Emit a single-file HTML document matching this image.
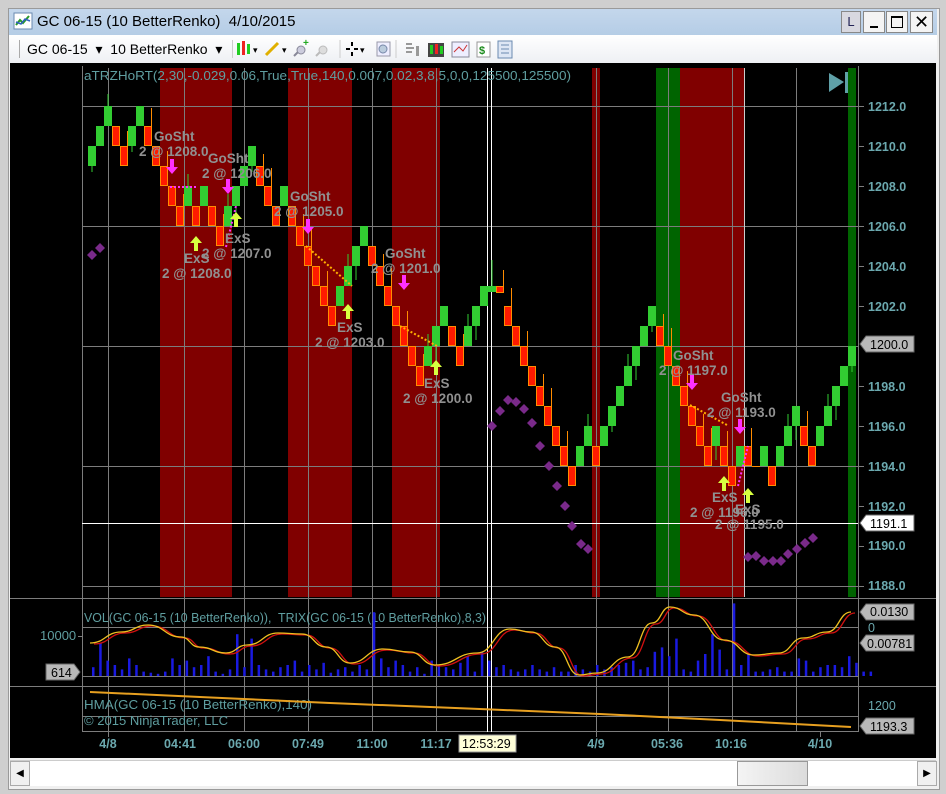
<!DOCTYPE html>
<html><head><meta charset="utf-8"><style>
html,body{margin:0;padding:0;width:946px;height:794px;overflow:hidden;background:#d6d6d6;font-family:"Liberation Sans",sans-serif}
.abs{position:absolute}
</style></head><body>
<div class="abs" style="left:0;top:0;width:946px;height:794px;background:#cfcfcf"></div>
<div class="abs" style="top:8px;left:8px;width:930px;height:780px;background:#f0f0f0;border:1px solid #9a9a9a"></div>
<div class="abs" style="left:9px;top:9px;width:928px;height:26px;background:linear-gradient(#c4d7ec,#b5cde6)"></div>
<svg class="abs" style="left:13px;top:12px" width="20" height="18"><rect x="1" y="1" width="18" height="16" fill="#fff" stroke="#6a8ab0"/><polyline points="3,13 7,8 10,11 16,4" fill="none" stroke="#2a9a2a" stroke-width="2"/><polyline points="3,10 8,12 12,7 17,9" fill="none" stroke="#3060c0" stroke-width="1.5"/></svg>
<div class="abs" style="left:37px;top:13px;font-size:15px;color:#000">GC 06-15 (10 BetterRenko)&nbsp; 4/10/2015</div>
<div class="abs" style="left:841px;top:11px;width:18px;height:20px;background:#d8d8e0;border:1px solid #888;font-size:13px;text-align:center;line-height:20px;color:#225">L</div>
<div class="abs" style="left:863px;top:11px;width:20px;height:20px;background:#f4f4f4;border:1px solid #888"><div class="abs" style="left:6px;top:14px;width:8px;height:2px;background:#000"></div></div>
<div class="abs" style="left:886px;top:11px;width:20px;height:20px;background:#f4f4f4;border:1px solid #888"><div class="abs" style="left:4px;top:4px;width:10px;height:9px;border:1px solid #000;border-top-width:2px"></div></div>
<div class="abs" style="left:910px;top:11px;width:21px;height:20px;background:#f4f4f4;border:1px solid #888;font-size:18px;line-height:20px;text-align:center">✕</div>
<div class="abs" style="left:9px;top:35px;width:928px;height:28px;background:linear-gradient(#ffffff,#eef0f4)"></div>
<div class="abs" style="left:27px;top:41px;font-size:14px;color:#000">GC 06-15 &nbsp;▾&nbsp; 10 BetterRenko &nbsp;▾</div>
<div class="abs" style="left:19px;top:40px;width:1px;height:18px;background:#aaa"></div>
<div class="abs" style="left:232px;top:40px;width:1px;height:18px;background:#ccc"></div>
<svg class="abs" style="left:236px;top:38px" width="280" height="22">
<rect x="1" y="5" width="3" height="12" fill="#2c2"/><rect x="6" y="3" width="3" height="14" fill="#e22"/><rect x="11" y="6" width="3" height="10" fill="#2c2"/><text x="17" y="15" font-size="9">▾</text>
<line x1="30" y1="17" x2="42" y2="5" stroke="#e0b000" stroke-width="3"/><text x="46" y="15" font-size="9">▾</text>
<circle cx="65" cy="12" r="4" fill="#ccd" stroke="#889"/><line x1="58" y1="18" x2="62" y2="14" stroke="#889" stroke-width="2"/><text x="67" y="8" font-size="10" fill="#2a2" font-weight="bold">+</text>
<circle cx="87" cy="12" r="4" fill="#ddd" stroke="#bbb"/><line x1="80" y1="18" x2="84" y2="14" stroke="#bbb" stroke-width="2"/>
<line x1="104" y1="2" x2="104" y2="20" stroke="#ccc"/>
<path d="M110 11h4M118 11h4M116 4v4M116 14v4" stroke="#000" stroke-width="2"/><text x="124" y="15" font-size="9">▾</text>
<rect x="141" y="4" width="13" height="14" fill="#eef" stroke="#99a"/><circle cx="147" cy="11" r="4" fill="#bcd" stroke="#78a"/>
<line x1="160" y1="2" x2="160" y2="20" stroke="#ccc"/>
<path d="M170 6h6M170 10h8M170 14h6" stroke="#999" stroke-width="2"/><rect x="180" y="8" width="3" height="10" fill="#999"/>
<rect x="192" y="5" width="16" height="14" fill="#444"/><rect x="194" y="7" width="3" height="9" fill="#2c2"/><rect x="199" y="6" width="3" height="10" fill="#e22"/><rect x="204" y="8" width="3" height="8" fill="#2c2"/>
<rect x="216" y="4" width="17" height="15" fill="#eef" stroke="#889"/><polyline points="218,14 223,9 227,13 231,7" fill="none" stroke="#c33"/>
<rect x="241" y="4" width="13" height="15" fill="#fff" stroke="#999"/><text x="243" y="16" font-size="11" fill="#1a8a1a" font-weight="bold">$</text>
<rect x="262" y="3" width="14" height="17" fill="#dde6f4" stroke="#6a8ab0"/><path d="M265 7h8M265 11h8M265 15h8" stroke="#6a8ab0"/>
</svg>
<svg class="abs" style="left:0;top:0" width="946" height="794" id="ch">
<rect x="10" y="63" width="926" height="695" fill="#000"/>
<g fill="#800000"><rect x="160" y="68" width="72" height="529"/><rect x="288" y="68" width="64" height="529"/><rect x="392" y="68" width="48" height="529"/><rect x="592" y="68" width="8" height="529"/><rect x="680" y="68" width="64" height="529"/></g>
<g fill="#006400"><rect x="656" y="68" width="24" height="529"/><rect x="848" y="68" width="8" height="529"/></g>
<g stroke="#7c7c7c" stroke-width="1">
<line x1="82" y1="106.5" x2="858" y2="106.5"/><line x1="82" y1="226.5" x2="858" y2="226.5"/><line x1="82" y1="346.5" x2="858" y2="346.5"/><line x1="82" y1="466.5" x2="858" y2="466.5"/><line x1="82" y1="586.5" x2="858" y2="586.5"/>
<line x1="108.5" y1="68" x2="108.5" y2="732"/><line x1="184.5" y1="68" x2="184.5" y2="732"/><line x1="244.5" y1="68" x2="244.5" y2="732"/><line x1="308.5" y1="68" x2="308.5" y2="732"/><line x1="372.5" y1="68" x2="372.5" y2="732"/><line x1="436.5" y1="68" x2="436.5" y2="732"/><line x1="596.5" y1="68" x2="596.5" y2="732"/><line x1="668.5" y1="68" x2="668.5" y2="732"/><line x1="732.5" y1="68" x2="732.5" y2="732"/><line x1="796.5" y1="68" x2="796.5" y2="732"/>
<line x1="82.5" y1="66" x2="82.5" y2="732"/><line x1="858.5" y1="66" x2="858.5" y2="732"/>
<line x1="10" y1="598.5" x2="936" y2="598.5"/><line x1="10" y1="686.5" x2="936" y2="686.5"/><line x1="82" y1="627.5" x2="858" y2="627.5"/><line x1="82" y1="676.5" x2="858" y2="676.5"/><line x1="82" y1="716.5" x2="858" y2="716.5"/><line x1="82" y1="731.5" x2="858" y2="731.5"/>
</g>
<g stroke="#fff"><line x1="487.5" y1="68" x2="487.5" y2="732"/><line x1="491.5" y1="68" x2="491.5" y2="732"/><line x1="82" y1="523.5" x2="858" y2="523.5"/><line x1="744.5" y1="68" x2="744.5" y2="597" stroke="#ccc"/></g>
<g id="bricks"></g>
<g fill="#7a2a8a" id="dia"></g>
<g stroke="#ffb000" stroke-width="2" stroke-dasharray="2,2" fill="none"><line x1="306" y1="246" x2="352" y2="286"/><line x1="400" y1="326" x2="437" y2="346"/><line x1="690" y1="405" x2="727" y2="425"/></g>
<g stroke="#ff30ff" stroke-width="2" stroke-dasharray="2,2" fill="none"><line x1="170" y1="187" x2="198" y2="187"/><line x1="226" y1="247" x2="236" y2="206"/><line x1="738" y1="486" x2="748" y2="446"/></g>
<g id="arrows"></g>
<g font-size="13.5" font-weight="bold" fill="#909090" font-family="Liberation Sans,sans-serif">
<text x="154" y="141">GoSht</text><text x="139" y="156">2 @ 1208.0</text>
<text x="208" y="163">GoSht</text><text x="202" y="178">2 @ 1206.0</text>
<text x="290" y="201">GoSht</text><text x="274" y="216">2 @ 1205.0</text>
<text x="225" y="243">ExS</text><text x="202" y="258">2 @ 1207.0</text>
<text x="184" y="263">ExS</text><text x="162" y="278">2 @ 1208.0</text>
<text x="385" y="258">GoSht</text><text x="371" y="273">2 @ 1201.0</text>
<text x="337" y="332">ExS</text><text x="315" y="347">2 @ 1203.0</text>
<text x="424" y="388">ExS</text><text x="403" y="403">2 @ 1200.0</text>
<text x="673" y="360">GoSht</text><text x="659" y="375">2 @ 1197.0</text>
<text x="721" y="402">GoSht</text><text x="707" y="417">2 @ 1193.0</text>
<text x="735" y="514">ExS</text><text x="712" y="502">ExS</text><text x="690" y="517">2 @ 1196.0</text>
<text x="715" y="529">2 @ 1195.0</text>
</g>
<g fill="#5f9ea0" font-size="13" font-family="Liberation Sans,sans-serif">
<text x="84" y="80" textLength="487" lengthAdjust="spacingAndGlyphs">aTRZHoRT(2,30,-0.029,0.06,True,True,140,0.007,0.02,3,8,5,0,0,125500,125500)</text>
<text x="84" y="622" textLength="402" lengthAdjust="spacingAndGlyphs">VOL(GC 06-15 (10 BetterRenko)),&nbsp; TRIX(GC 06-15 (10 BetterRenko),8,3)</text>
<text x="84" y="709" textLength="228" lengthAdjust="spacingAndGlyphs">HMA(GC 06-15 (10 BetterRenko),140)</text>
<text x="84" y="725" textLength="144" lengthAdjust="spacingAndGlyphs">© 2015 NinjaTrader, LLC</text>
<text x="40" y="640">10000</text><line x1="78" y1="636.5" x2="82" y2="636.5" stroke="#7c7c7c"/>
</g>
<g fill="#6ba8ae" font-size="12.5" font-weight="bold" font-family="Liberation Sans,sans-serif">
<text x="868" y="111">1212.0</text><text x="868" y="151">1210.0</text><text x="868" y="191">1208.0</text><text x="868" y="231">1206.0</text><text x="868" y="271">1204.0</text><text x="868" y="311">1202.0</text><text x="868" y="391">1198.0</text><text x="868" y="431">1196.0</text><text x="868" y="471">1194.0</text><text x="868" y="511">1192.0</text><text x="868" y="550">1190.0</text><text x="868" y="590">1188.0</text>
<text x="868" y="632" font-weight="normal">0</text><text x="868" y="710" font-weight="normal">1200</text>
</g>
<g stroke="#7c7c7c"><line x1="858" y1="106.5" x2="864" y2="106.5"/><line x1="858" y1="146.5" x2="864" y2="146.5"/><line x1="858" y1="186.5" x2="864" y2="186.5"/><line x1="858" y1="226.5" x2="864" y2="226.5"/><line x1="858" y1="266.5" x2="864" y2="266.5"/><line x1="858" y1="306.5" x2="864" y2="306.5"/><line x1="858" y1="386.5" x2="864" y2="386.5"/><line x1="858" y1="426.5" x2="864" y2="426.5"/><line x1="858" y1="466.5" x2="864" y2="466.5"/><line x1="858" y1="506.5" x2="864" y2="506.5"/><line x1="858" y1="546.5" x2="864" y2="546.5"/><line x1="858" y1="586.5" x2="864" y2="586.5"/></g>
<g font-family="Liberation Sans,sans-serif" font-size="12.5">
<path d="M860 344 L866 336 H914 V352 H866 Z" fill="#b8b8b8" stroke="#666"/><text x="870" y="349">1200.0</text>
<path d="M860 523 L866 515 H914 V531 H866 Z" fill="#fff" stroke="#666"/><text x="870" y="528">1191.1</text>
<path d="M860 612 L866 604 H914 V620 H866 Z" fill="#b8b8b8" stroke="#666"/><text x="870" y="616">0.0130</text>
<path d="M860 643 L866 635 H914 V651 H866 Z" fill="#b8b8b8" stroke="#666"/><text x="867" y="648">0.00781</text>
<path d="M860 726 L866 718 H914 V734 H866 Z" fill="#b8b8b8" stroke="#666"/><text x="870" y="731">1193.3</text>
<path d="M80 672 L74 664 H46 V680 H74 Z" fill="#b8b8b8" stroke="#666"/><text x="51" y="677">614</text>
<rect x="459" y="735" width="57" height="17" fill="#ffffd8" stroke="#999"/><text x="462" y="748" fill="#000">12:53:29</text>
</g>
<g fill="#6ba8ae" font-size="12.5" font-weight="bold" font-family="Liberation Sans,sans-serif" text-anchor="middle">
<text x="108" y="748">4/8</text><text x="180" y="748">04:41</text><text x="244" y="748">06:00</text><text x="308" y="748">07:49</text><text x="372" y="748">11:00</text><text x="436" y="748">11:17</text><text x="596" y="748">4/9</text><text x="667" y="748">05:36</text><text x="731" y="748">10:16</text><text x="820" y="748">4/10</text>
</g>
<g stroke="#7c7c7c"><line x1="108.5" y1="732" x2="108.5" y2="737"/><line x1="596.5" y1="732" x2="596.5" y2="737"/><line x1="820.5" y1="732" x2="820.5" y2="737"/></g>
<g id="vol" fill="#1a1ae0"></g>
<path id="trixr" fill="none" stroke="#d01010" stroke-width="1.3"/>
<path id="trixy" fill="none" stroke="#f0c020" stroke-width="1.3"/>
<polyline points="90,692 200,697 330,703 480,709 600,714 720,720 851,727" fill="none" stroke="#e8a020" stroke-width="2"/>
<polygon points="829,73 829,92 844,82" fill="#5fa0a8"/><rect x="845" y="72" width="3" height="21" fill="#5fa0a8"/>
</svg>
<div class="abs" style="left:10px;top:760px;width:926px;height:25px;background:#fff;border-top:1px solid #ccc"></div>
<div class="abs" style="left:10px;top:761px;width:18px;height:23px;background:#f0f0f0;border:1px solid #aaa;font-size:10px;line-height:23px;text-align:center">◀</div>
<div class="abs" style="left:917px;top:761px;width:18px;height:23px;background:#f0f0f0;border:1px solid #aaa;font-size:10px;line-height:23px;text-align:center">▶</div>
<div class="abs" style="left:737px;top:761px;width:69px;height:23px;background:linear-gradient(90deg,#f4f4f4,#dcdcdc);border:1px solid #999"></div>
<script>
(function(){
var NS="http://www.w3.org/2000/svg";
function el(p,t,a){var e=document.createElementNS(NS,t);for(var k in a)e.setAttribute(k,a[k]);p.appendChild(e);return e;}
var seq="G1209 G1210 G1211 R1210 R1209 G1210 G1211 R1210 R1209 R1208 R1207 R1206 G1207 R1206 G1207 R1206 R1205 G1206 G1207 G1208 G1209 R1208 R1207 R1206 G1207 R1206 R1205 R1204 R1203 R1202 R1201 G1202 G1203 G1204 G1205 R1204 R1203 R1202 R1201 R1200 R1199 R1198 G1199 G1200 G1201 R1200 R1199 G1200 G1201 G1202 D1203 E1203 R1201 R1200 R1199 R1198 R1197 R1196 R1195 R1194 R1193 G1194 G1195 R1194 G1195 G1196 G1197 G1198 G1199 G1200 G1201 R1200 R1199 R1198 R1197 R1196 R1195 R1194 G1195 R1194 R1193 G1194 R1194 F1194 G1194 R1193 G1194 G1195 G1196 R1195 R1194 G1195 G1196 G1197 G1198 G1199".split(" ");
var g=document.getElementById("bricks");
function Y(p){return 106+(1212-p)*20;}
for(var i=0;i<seq.length;i++){
 var t=seq[i][0],lo=+seq[i].slice(1),x=88+i*8,y=Y(lo+1);
 var w=(i*7%5);
 if(t=="G"){
  if(w<2) el(g,"line",{x1:x+4,y1:y+20,x2:x+4,y2:y+20+6+w*8,stroke:"#32cd32"});
  if(w==4) el(g,"line",{x1:x+4,y1:y,x2:x+4,y2:y-12,stroke:"#32cd32"});
  el(g,"rect",{x:x,y:y,width:8,height:20,fill:"#32cd32"});
 }else if(t=="R"){
  if(w>=2) el(g,"line",{x1:x+7.5,y1:y,x2:x+7.5,y2:y-6-w*3,stroke:"#ff8c00"});
  el(g,"rect",{x:x+.5,y:y+.5,width:7,height:19,fill:"#ff1a00",stroke:"#ff8c00"});
 }else if(t=="D"){
  el(g,"line",{x1:x+4,y1:y+20,x2:x+4,y2:y-6,stroke:"#32cd32"});
  el(g,"rect",{x:x,y:y+20,width:8,height:6,fill:"#32cd32"});
 }else if(t=="E"){
  el(g,"line",{x1:x+7.5,y1:y+20,x2:x+7.5,y2:y+4,stroke:"#ff8c00"});
  el(g,"rect",{x:x+.5,y:y+20.5,width:7,height:6,fill:"#ff1a00",stroke:"#ff8c00"});
 }else{
  el(g,"line",{x1:x,y1:y+20.5,x2:x+8,y2:y+20.5,stroke:"#ff8c00"});
 }
}
var d=document.getElementById("dia");
[[92,255],[100,248],[492,426],[500,411],[508,400],[516,402],[524,409],[532,423],[540,446],[549,466],[557,486],[565,506],[572,526],[581,544],[588,549],[748,557],[756,556],[764,561],[773,561],[781,561],[788,554],[797,549],[805,543],[813,538]].forEach(function(p){
 el(d,"polygon",{points:(p[0])+","+(p[1]-5)+" "+(p[0]+5)+","+p[1]+" "+p[0]+","+(p[1]+5)+" "+(p[0]-5)+","+p[1]});
});
var a=document.getElementById("arrows");
function dn(x,y){el(a,"path",{d:"M"+(x-2)+" "+(y-13)+"h4v8h4l-6 7l-6-7h4z",fill:"#ff30ff"});}
function up(x,y){el(a,"path",{d:"M"+(x-2)+" "+(y+13)+"h4v-8h4l-6-7l-6 7h4z",fill:"#d8ff40"});}
[[172,172],[228,192],[308,232],[404,288],[692,388],[740,432]].forEach(function(p){dn(p[0],p[1]);});
[[196,238],[236,214],[348,306],[436,362],[724,478],[748,490]].forEach(function(p){up(p[0],p[1]);});
var v=document.getElementById("vol");
var hs=[8,30,14,10,6,16,10,4,3,2,4,16,10,14,8,10,18,4,2,6,38,8,34,10,6,4,8,10,14,4,10,6,12,3,6,8,4,10,6,58,16,8,14,10,4,8,2,14,10,8,6,12,18,4,22,14,8,10,6,4,6,10,6,4,8,4,4,10,6,4,10,6,8,10,12,14,6,8,22,26,18,34,6,4,14,20,38,24,6,66,10,20,4,4,6,8,4,4,16,14,4,8,10,10,8,18,12,4,4];
for(var j=0;j<hs.length;j++){var x=92+j*7.2;el(v,"rect",{x:x,y:676-hs[j]*1.1,width:2.5,height:hs[j]*1.1});}
var pts=[[90,643],[121,632],[148,625],[181,637],[199,647],[226,653],[247,645],[278,633],[302,634],[326,647],[350,663],[383,649],[410,652],[435,665],[477,653],[510,629],[531,632],[555,647],[579,675],[597,673],[628,657],[652,623],[670,607],[694,615],[724,640],[754,655],[779,653],[803,638],[827,632],[851,612]];
function path(P,dx,dy){var s="M"+(P[0][0]+dx)+" "+(P[0][1]+dy);for(var k=1;k<P.length;k++){var p0=P[k-1],p1=P[k];var mx=(p0[0]+p1[0])/2;s+=" C"+(mx+dx)+" "+(p0[1]+dy)+" "+(mx+dx)+" "+(p1[1]+dy)+" "+(p1[0]+dx)+" "+(p1[1]+dy);}return s;}
document.getElementById("trixy").setAttribute("d",path(pts,0,0));
document.getElementById("trixr").setAttribute("d",path(pts,4,1));
})();
</script>
</body></html>
